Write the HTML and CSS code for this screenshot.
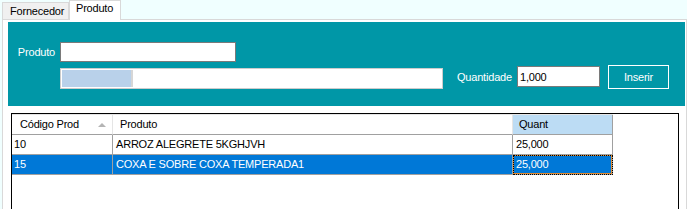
FILE: index.html
```html
<!DOCTYPE html>
<html lang="pt">
<head>
    <meta charset="UTF-8">
    <title>Produto</title>
    <link rel="stylesheet" href="styles.css">
</head>
<body>
    <div class="tabs">
        <div class="tab">Fornecedor</div>
        <div class="tab active">Produto</div>
    </div>
    <div class="page">
        <div class="panel">
            <div class="row">
                <label class="lbl">Produto</label>
                <input class="txt txt-produto" type="text">
            </div>
            <div class="row row2">
                <div class="progress"><div class="progress-fill"></div></div>
                <label class="lbl-qtd">Quantidade</label>
                <input class="txt txt-qtd" type="text" value="1,000">
                <button class="btn">Inserir</button>
            </div>
        </div>
        <div class="grid">
            <div class="grid-row head">
                <div class="cell c1">Código Prod <span class="sort"></span></div>
                <div class="cell c2">Produto</div>
                <div class="cell c3 hot">Quant</div>
            </div>
            <div class="grid-row">
                <div class="cell c1">10</div>
                <div class="cell c2">ARROZ ALEGRETE 5KGHJVH</div>
                <div class="cell c3">25,000</div>
            </div>
            <div class="grid-row selected">
                <div class="cell c1">15</div>
                <div class="cell c2">COXA E SOBRE COXA TEMPERADA1</div>
                <div class="cell c3 focus">25,000</div>
            </div>
        </div>
    </div>
</body>
</html>
```

FILE: styles.css
```css
* {
    box-sizing: border-box;
}
body {
    margin: 0;
    width: 687px;
    height: 209px;
    overflow: hidden;
    background-color: #f0ffff;
    font-family: "Liberation Sans", Arial, sans-serif;
    font-size: 11px;
    letter-spacing: -0.2px;
    color: #000;
}
.tabs {
    display: flex;
    align-items: flex-end;
    height: 19px;
    padding-left: 2px;
    position: relative;
    z-index: 1;
}
.tab {
    height: 17px;
    width: 67px;
    padding-left: 7px;
    line-height: 16px;
    background-color: #f0f0f0;
    border: 1px solid #d9d9d9;
    border-bottom: none;
}
.tab.active {
    width: 52px;
    height: 20px;
    margin-bottom: -1px;
    padding-left: 6px;
    line-height: 14px;
    background-color: #fff;
}
.page {
    margin-left: 2px;
    width: 685px;
    height: 200px;
    background-color: #fff;
    border: 1px solid #d9d9d9;
    padding: 2px 1px 0 5px;
}
.panel {
    height: 84px;
    background-color: #0097a7;
    padding-top: 20px;
    color: #fff;
}
.row {
    display: flex;
    align-items: center;
    height: 20px;
}
.lbl {
    flex: none;
    width: 52px;
    padding-right: 5px;
    text-align: right;
}
.txt {
    flex: none;
    height: 20px;
    border: 1px solid #7a7a7a;
    padding: 0 2px;
    font-family: inherit;
    font-size: 11px;
    letter-spacing: -0.2px;
    color: #000;
    outline: none;
}
.txt-produto {
    width: 176px;
}
.row2 {
    align-items: flex-start;
    height: 24px;
    margin-top: 3px;
    padding-left: 52px;
}
.progress {
    flex: none;
    margin-top: 3px;
    width: 383px;
    height: 21px;
    border: 1px solid #cccccc;
    background-color: #fff;
    padding: 1px;
}
.progress-fill {
    width: 71px;
    height: 17px;
    background-color: #b9d1ea;
    border-right: 2px solid #d6d6d6;
}
.lbl-qtd {
    flex: none;
    width: 55px;
    margin-left: 14px;
    line-height: 24px;
    white-space: nowrap;
}
.txt-qtd {
    margin-left: 5px;
    margin-top: 1px;
    width: 83px;
    height: 21px;
}
.btn {
    flex: none;
    margin-left: 8px;
    width: 61px;
    height: 24px;
    border: 1px solid #fff;
    background: transparent;
    color: #fff;
    font-family: inherit;
    font-size: 11px;
    letter-spacing: -0.2px;
    padding: 0;
}
.grid {
    margin-top: 7px;
    margin-left: 3px;
    width: 668px;
    height: 110px;
    border: 1px solid #000;
    background-color: #fff;
}
.grid-row {
    display: flex;
    width: 601px;
}
.cell {
    height: 20px;
    line-height: 19px;
    border-right: 1px solid #a0a0a0;
    border-bottom: 1px solid #a0a0a0;
    padding-left: 3px;
    white-space: nowrap;
    overflow: hidden;
}
.c1 {
    width: 101px;
    padding-left: 2px;
}
.c2 {
    width: 400px;
}
.c3 {
    width: 100px;
}
.head {
    border-top: 1px solid #e5e5e5;
}
.head .cell {
    border-right-color: #e5e5e5;
    padding-left: 7px;
}
.head .c1 {
    display: flex;
    justify-content: space-between;
    align-items: center;
    padding-left: 8px;
    padding-right: 6px;
}
.head .hot {
    background-color: #bcdcf4;
    padding-left: 6px;
    border-right-color: #a0a0a0;
}
.sort {
    width: 0;
    height: 0;
    border-left: 4px solid transparent;
    border-right: 4px solid transparent;
    border-bottom: 4px solid #b4b4b4;
}
.selected .cell {
    background-color: #0078d7;
    color: #fff;
}
.focus {
    outline: 1px dotted #000;
    outline-offset: -1px;
    box-shadow: inset 0 0 0 1px #e08a30;
}
```
